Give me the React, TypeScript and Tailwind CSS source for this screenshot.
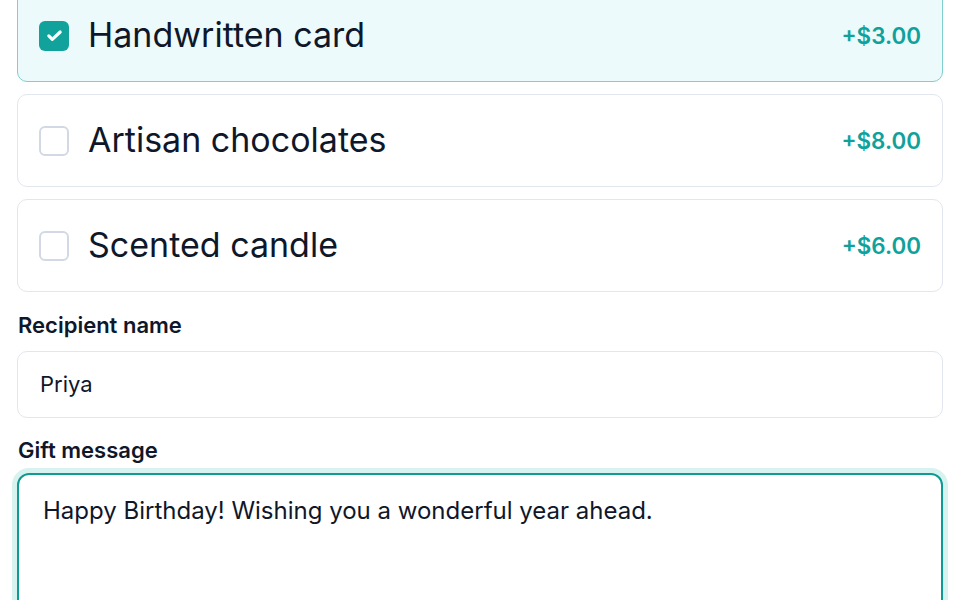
import React from "react";

const items = [
  { name: "Handwritten card", price: "+$3.00", checked: true },
  { name: "Artisan chocolates", price: "+$8.00", checked: false },
  { name: "Scented candle", price: "+$6.00", checked: false },
];

function Check() {
  return (
    <svg width="21" height="21" viewBox="0 0 24 24" fill="none" stroke="white" strokeWidth="3.6" strokeLinecap="round" strokeLinejoin="round">
      <path d="M5.5 12.5l4 4L18.5 8" />
    </svg>
  );
}

export default function App() {
  return (
    <div className="min-h-screen bg-white px-[17px] text-[#0f172a] overflow-hidden" style={{ fontFamily: "Inter, 'Noto Sans', sans-serif" }}>
      <div className="-mt-[11px] flex flex-col gap-[12px]">
        {items.map((it) => (
          <div
            key={it.name}
            className={
              it.checked
                ? "flex h-[93px] items-center justify-between rounded-[10px] border border-[#7fcfcf] bg-[#ecfafb] pl-[21px] pr-[21px]"
                : "flex h-[93px] items-center justify-between rounded-[10px] border border-[#e2e6ee] bg-white pl-[21px] pr-[21px]"
            }
          >
            <div className="flex items-center gap-[19px]">
              {it.checked ? (
                <div className="flex h-[30px] w-[30px] items-center justify-center rounded-[6px] bg-[#12a29c]">
                  <Check />
                </div>
              ) : (
                <div className="h-[30px] w-[30px] rounded-[6px] border-2 border-[#d2d9e4] bg-white" />
              )}
              <span className="text-[34px] leading-none -mt-[2px]">{it.name}</span>
            </div>
            <span className="text-[22.4px] font-semibold text-[#10a19b]">{it.price}</span>
          </div>
        ))}
      </div>
      <div className="mt-[21px] text-[22px] font-semibold leading-[24px] pl-px">Recipient name</div>
      <div className="mt-[14px] flex h-[67px] items-center rounded-[10px] border border-[#e2e6ee] px-[22px] text-[22px]">
        Priya
      </div>
      <div className="mt-[20px] text-[22px] font-semibold leading-[24px] pl-px">Gift message</div>
      <div className="mt-[11px] h-[200px] rounded-[12px] border-2 border-[#0f9a94] px-[24px] pt-[20px] text-[24px] leading-[32px] shadow-[0_0_0_5px_#d7f2ef]">
        Happy Birthday! Wishing you a wonderful year ahead.
      </div>
    </div>
  );
}
